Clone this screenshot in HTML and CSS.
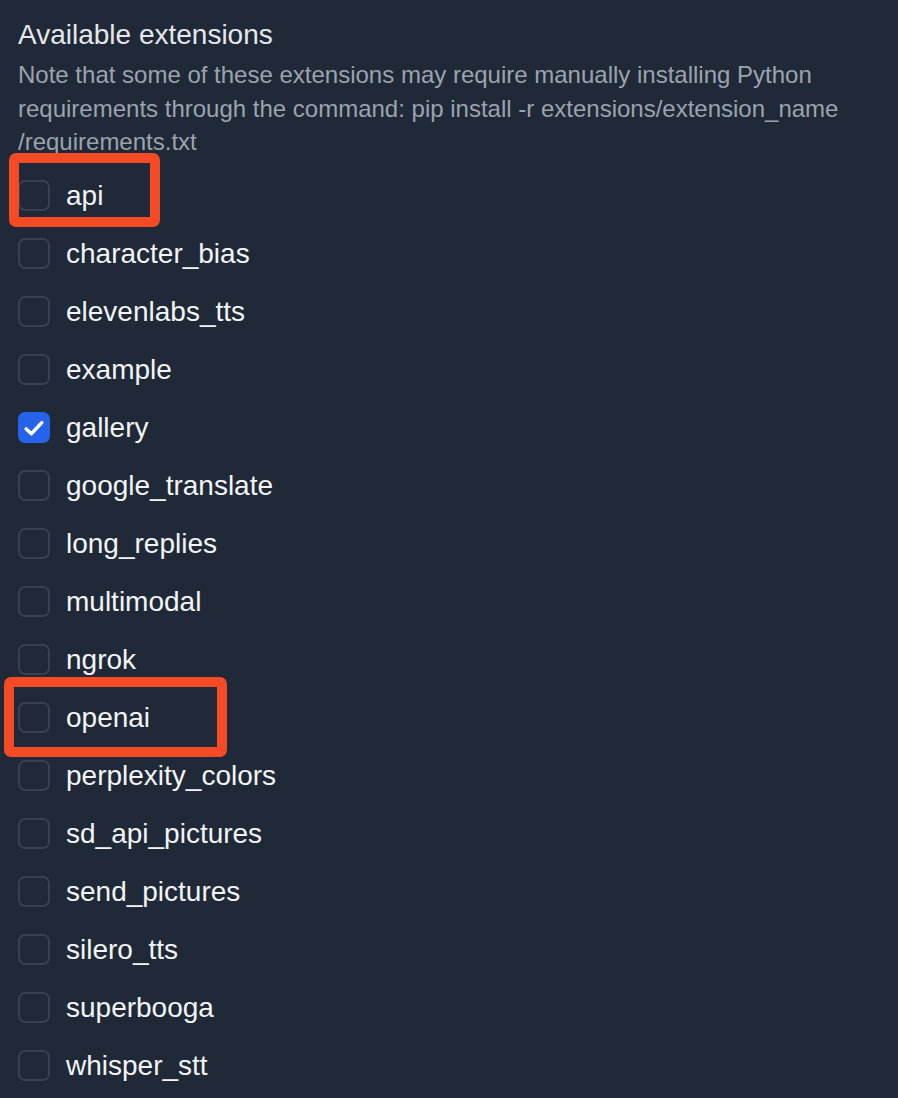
FILE: index.html
```html
<!DOCTYPE html>
<html>
<head>
<meta charset="utf-8">
<link rel="stylesheet" href="styles.css">
</head>
<body>
<div class="panel">
  <h2 class="title">Available extensions</h2>
  <p class="note">Note that some of these extensions may require manually installing Python requirements through the command: pip install -r extensions/extension_name<br>/requirements.txt</p>
  <ul class="list">
    <li class="row"><span class="box"></span><span class="label">api</span></li>
    <li class="row"><span class="box"></span><span class="label">character_bias</span></li>
    <li class="row"><span class="box"></span><span class="label">elevenlabs_tts</span></li>
    <li class="row"><span class="box"></span><span class="label">example</span></li>
    <li class="row"><span class="box checked"><svg viewBox="0 0 16 16" width="24" height="24"><path d="M2.8 8.6 L6.2 11.8 L13.2 4.4" fill="none" stroke="#fff" stroke-width="2.3" stroke-linecap="round" stroke-linejoin="round"/></svg></span><span class="label">gallery</span></li>
    <li class="row"><span class="box"></span><span class="label">google_translate</span></li>
    <li class="row"><span class="box"></span><span class="label">long_replies</span></li>
    <li class="row"><span class="box"></span><span class="label">multimodal</span></li>
    <li class="row"><span class="box"></span><span class="label">ngrok</span></li>
    <li class="row"><span class="box"></span><span class="label">openai</span></li>
    <li class="row"><span class="box"></span><span class="label">perplexity_colors</span></li>
    <li class="row"><span class="box"></span><span class="label">sd_api_pictures</span></li>
    <li class="row"><span class="box"></span><span class="label">send_pictures</span></li>
    <li class="row"><span class="box"></span><span class="label">silero_tts</span></li>
    <li class="row"><span class="box"></span><span class="label">superbooga</span></li>
    <li class="row"><span class="box"></span><span class="label">whisper_stt</span></li>
  </ul>
  <div class="highlight hl-api"></div>
  <div class="highlight hl-openai"></div>
</div>
</body>
</html>
```

FILE: styles.css
```css
html, body {
  margin: 0;
  padding: 0;
  background: #1f2937;
}
body {
  font-family: "Liberation Sans", Arial, Helvetica, sans-serif;
  width: 898px;
  height: 1098px;
  overflow: hidden;
}
.panel {
  position: relative;
  padding: 15px 0 0 18px;
}
.title {
  margin: 0;
  font-size: 28px;
  font-weight: 400;
  line-height: 40px;
  color: #e5e7eb;
}
.note {
  margin: 3px 0 0 0;
  width: 830px;
  font-size: 24px;
  line-height: 33.5px;
  color: #9ca3af;
}
.list {
  list-style: none;
  margin: 8px 0 0 0;
  padding: 0;
}
.row {
  display: flex;
  align-items: center;
  height: 58px;
  gap: 16px;
}
.box {
  box-sizing: border-box;
  width: 32px;
  height: 31px;
  border: 2px solid #374151;
  border-radius: 7px;
  background: #1f2937;
  display: flex;
  align-items: center;
  justify-content: center;
  flex: none;
}
.box.checked {
  background: #2563eb;
  border-color: #2563eb;
}
.label {
  font-size: 28px;
  color: #f3f4f6;
  line-height: 40px;
}
.highlight {
  position: absolute;
  box-sizing: border-box;
  border: 10px solid #f44a25;
  border-radius: 7px;
}
.hl-api {
  left: 9px;
  top: 153px;
  width: 151px;
  height: 74px;
}
.hl-openai {
  left: 4px;
  top: 677px;
  width: 223px;
  height: 80px;
}
```
